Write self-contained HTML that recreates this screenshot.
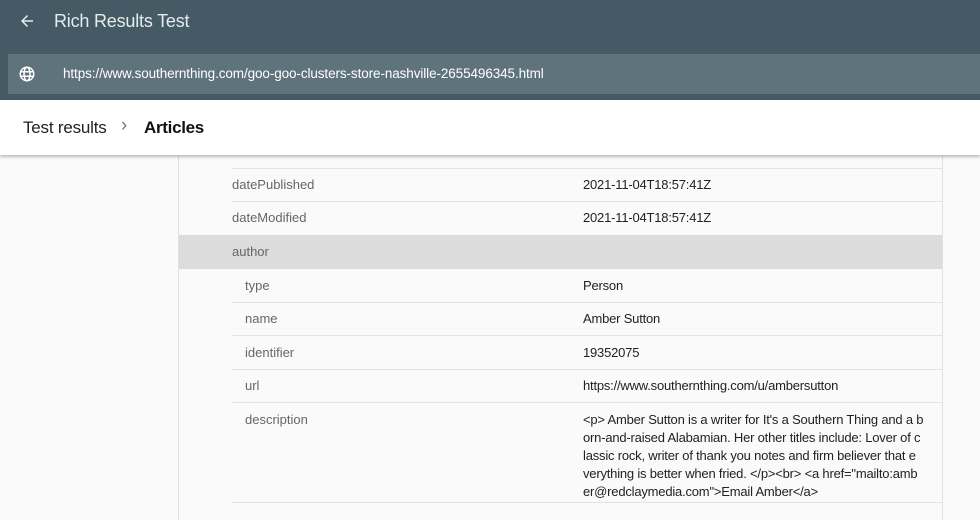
<!DOCTYPE html>
<html><head><meta charset="utf-8"><style>
*{margin:0;padding:0;box-sizing:border-box}
body{width:980px;height:508px;overflow:hidden;background:#fafafa;font-family:"Liberation Sans",Arial,sans-serif;position:relative}
.hdr{position:absolute;left:0;top:0;width:980px;height:100px;background:#455a64}
.title{position:absolute;left:54px;top:11px;color:#e6ebed;font-size:18px;letter-spacing:-0.2px}
.url{position:absolute;left:8px;top:54px;width:972px;height:40px;background:#5f737d}
.url span{position:absolute;left:55px;top:12px;color:#fff;font-size:13.5px;letter-spacing:-0.1px}
.bc{position:absolute;left:0;top:100px;width:980px;height:55px;background:#fff;box-shadow:0 2px 3px rgba(0,0,0,.25);z-index:2}
.bc .a{position:absolute;left:23px;top:18px;font-size:17px;color:#222;letter-spacing:-0.2px}
.bc .c{position:absolute;left:121px;top:15px;font-size:19px;color:#777}
.bc .b{position:absolute;left:144px;top:18px;font-size:17px;color:#111;font-weight:bold;letter-spacing:-0.3px}
.card{position:absolute;left:178px;top:140px;width:765px;height:380px;background:#fafafa;border-left:1px solid #e0e0e0;border-right:1px solid #e0e0e0}
.ln{position:absolute;left:232px;width:710px;height:1px;background:#e4e4e4}
.k{position:absolute;font-size:13px;color:#666}
.v{position:absolute;left:583px;font-size:13px;color:#222;line-height:18px;letter-spacing:-0.2px}
.band{position:absolute;left:179px;top:235px;width:763px;height:34px;background:#dcdcdc}
</style></head><body>
<div class="hdr">
<svg style="position:absolute;left:18px;top:12px" width="18" height="18" viewBox="0 0 24 24"><path d="M20 11H7.8l5.6-5.6L12 4l-8 8 8 8 1.4-1.4L7.8 13H20z" fill="#e6ebed"/></svg>
<div class="title">Rich Results Test</div>
<div class="url">
<svg style="position:absolute;left:10px;top:11px" width="18" height="18" viewBox="0 0 24 24"><circle cx="12" cy="12" r="9" fill="none" stroke="#fff" stroke-width="2"/><ellipse cx="12" cy="12" rx="4" ry="9" fill="none" stroke="#fff" stroke-width="2"/><path d="M3 9h18M3 15h18" stroke="#fff" stroke-width="2"/></svg>
<span>https://www.southernthing.com/goo-goo-clusters-store-nashville-2655496345.html</span></div>
</div>
<div class="bc"><span class="a">Test results</span><span class="c">›</span><span class="b">Articles</span></div>
<div class="card"></div>
<div class="band"></div>
<div class="ln" style="top:168px"></div>
<div class="ln" style="top:201px"></div>
<div class="ln" style="top:302px"></div>
<div class="ln" style="top:335px"></div>
<div class="ln" style="top:369px"></div>
<div class="ln" style="top:402px"></div>
<div class="ln" style="top:502px"></div>
<div class="k" style="left:232px;top:177px">datePublished</div><div class="v" style="top:176px">2021-11-04T18:57:41Z</div>
<div class="k" style="left:232px;top:210px">dateModified</div><div class="v" style="top:209px">2021-11-04T18:57:41Z</div>
<div class="k" style="left:232px;top:244px">author</div>
<div class="k" style="left:245px;top:278px">type</div><div class="v" style="top:277px">Person</div>
<div class="k" style="left:245px;top:311px">name</div><div class="v" style="top:310px">Amber Sutton</div>
<div class="k" style="left:245px;top:345px">identifier</div><div class="v" style="top:344px">19352075</div>
<div class="k" style="left:245px;top:378px">url</div><div class="v" style="top:377px">https://www.southernthing.com/u/ambersutton</div>
<div class="k" style="left:245px;top:412px">description</div>
<div class="v" style="top:411px">&lt;p&gt; Amber Sutton is a writer for It's a Southern Thing and a b<br>orn-and-raised Alabamian. Her other titles include: Lover of c<br>lassic rock, writer of thank you notes and firm believer that e<br>verything is better when fried. &lt;/p&gt;&lt;br&gt; &lt;a href="mailto:amb<br>er@redclaymedia.com"&gt;Email Amber&lt;/a&gt;</div>
</body></html>
